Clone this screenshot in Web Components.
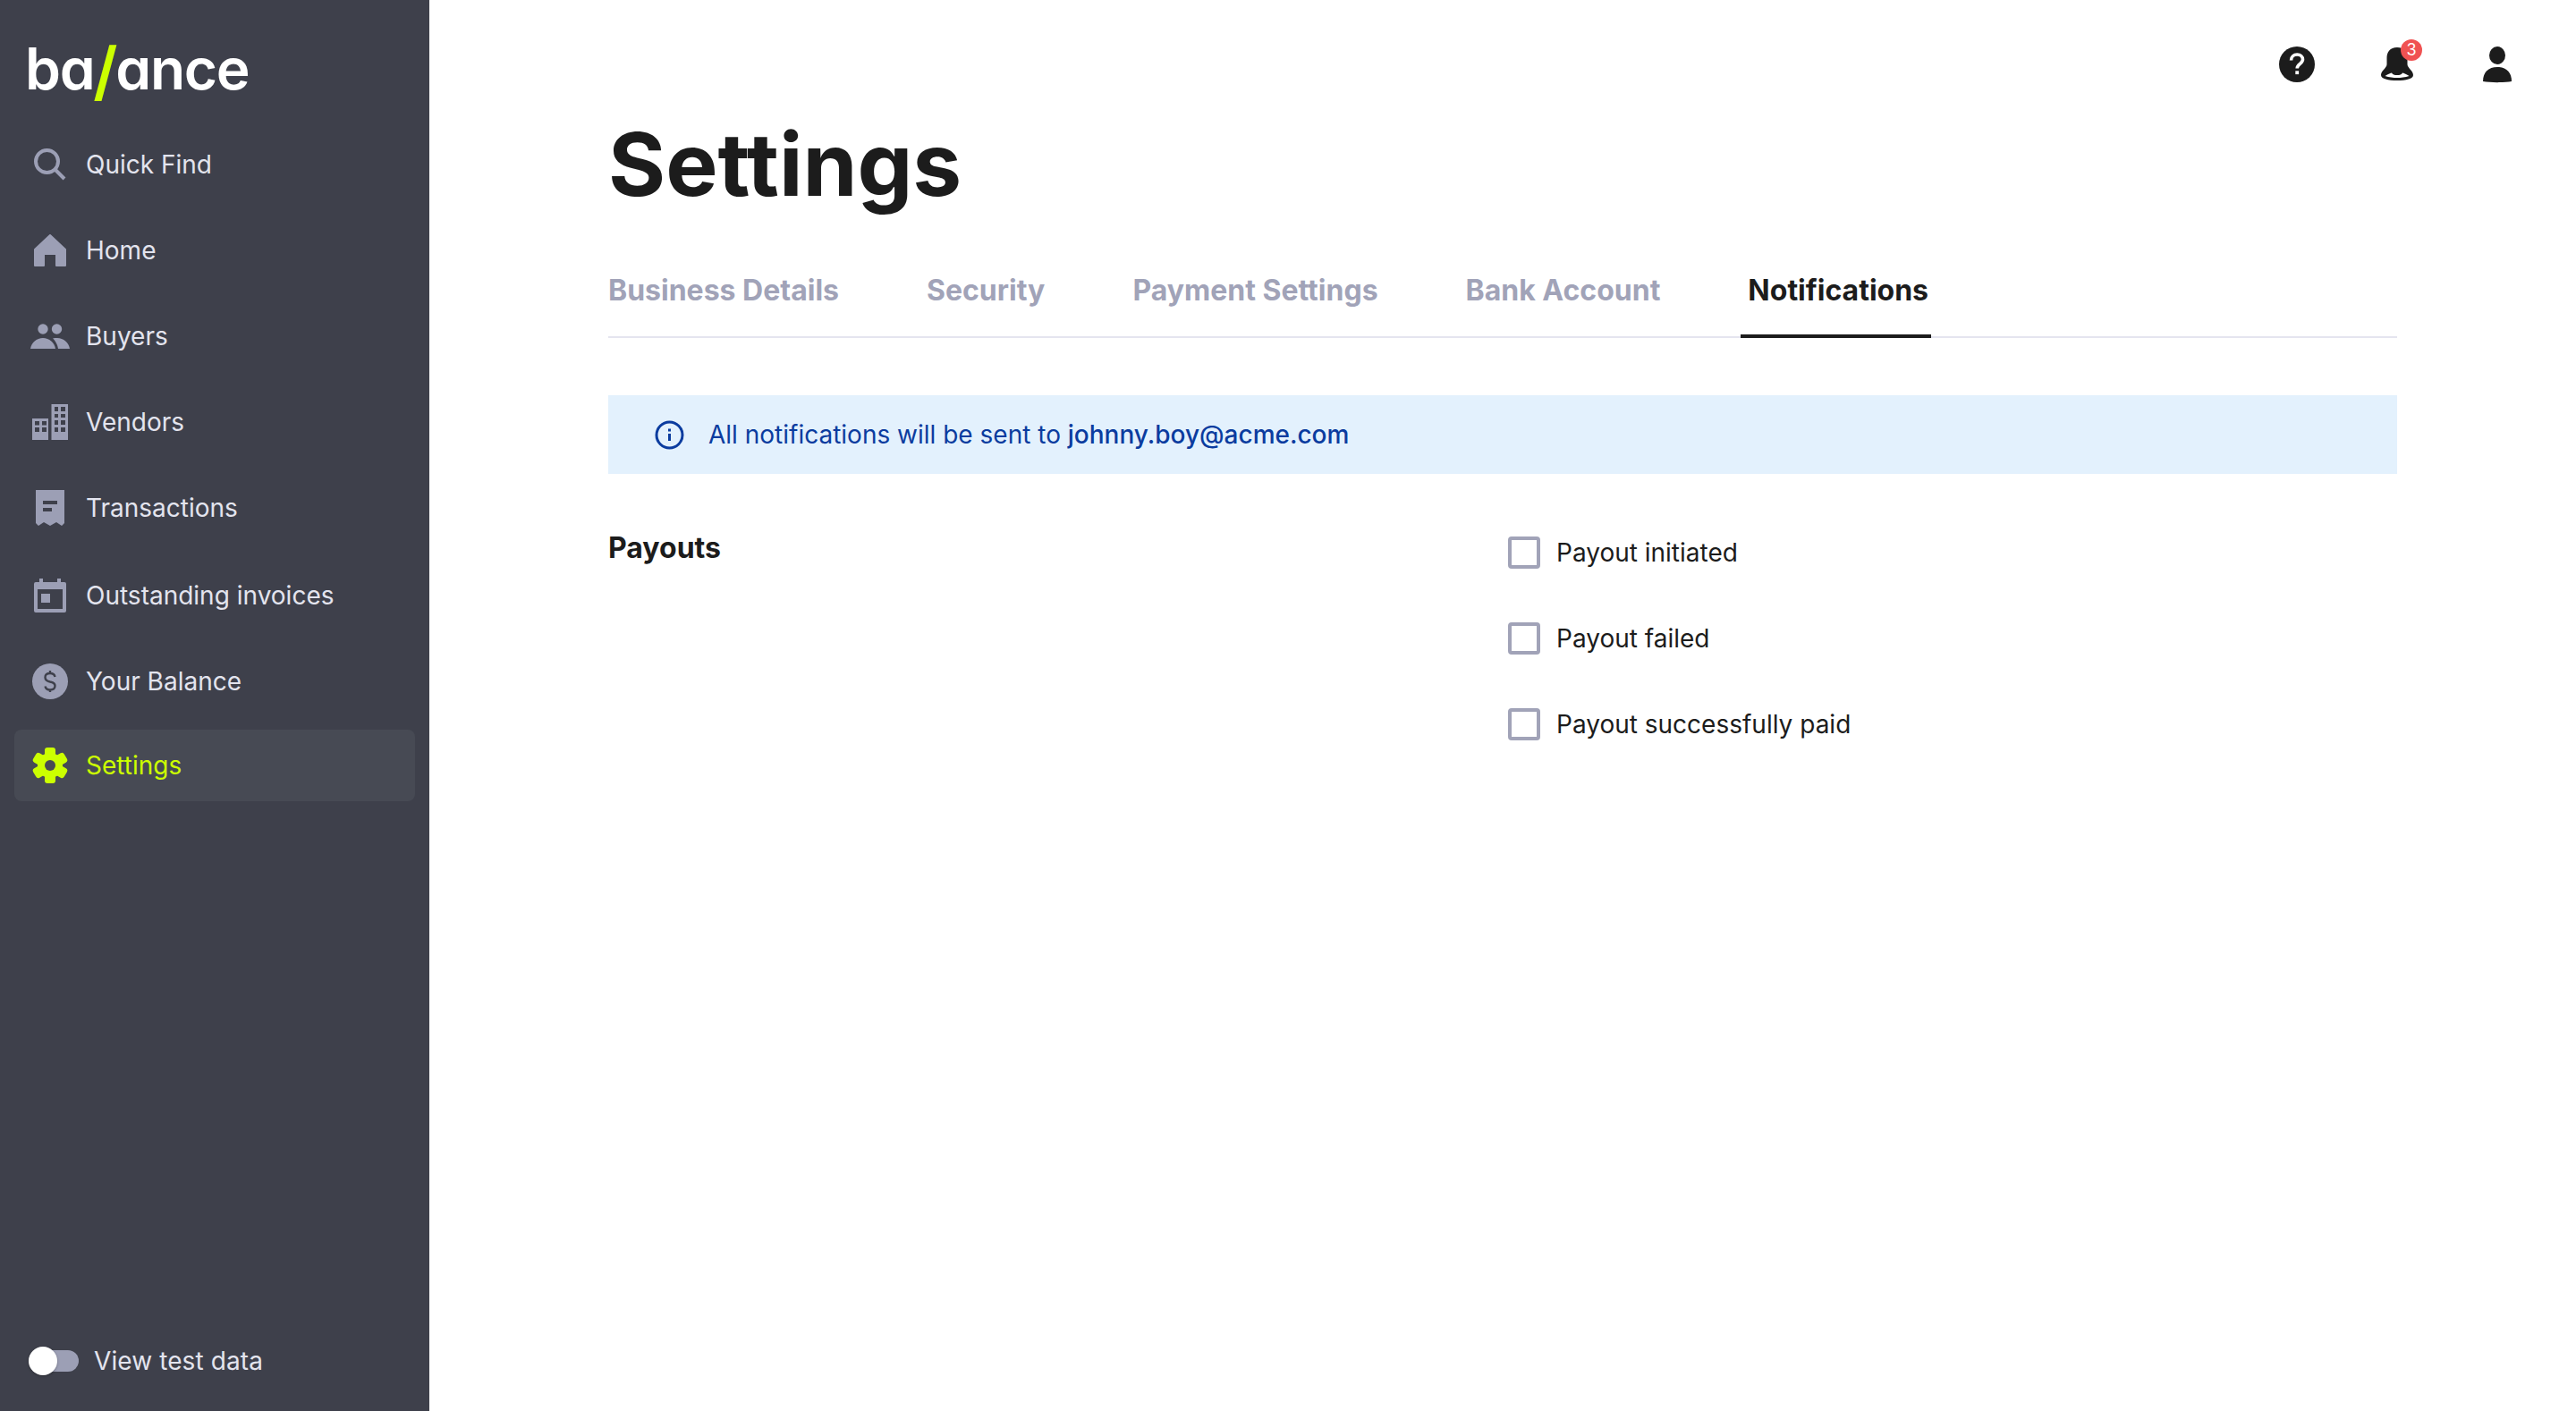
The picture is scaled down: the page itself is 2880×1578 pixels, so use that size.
<!DOCTYPE html>
<html lang="en">
<head>
<meta charset="utf-8">
<title>Settings</title>
<style>
    html, body { margin: 0; height: 100%; background: #fff; }
    body { font-family: Inter, "Liberation Sans", sans-serif; }
</style>
</head>
<body>
<app-shell>
    <side-nav slot="side">
        <nav-item icon="search">Quick Find</nav-item>
        <nav-item icon="home">Home</nav-item>
        <nav-item icon="buyers">Buyers</nav-item>
        <nav-item icon="vendors">Vendors</nav-item>
        <nav-item icon="receipt">Transactions</nav-item>
        <nav-item icon="calendar" style="margin-top:2px">Outstanding invoices</nav-item>
        <nav-item icon="dollar">Your Balance</nav-item>
        <nav-item icon="gear" active style="margin-top:-2px">Settings</nav-item>
    </side-nav>
    <top-bar></top-bar>
    <settings-page>
        <tab-bar>
            <tab-item>Business Details</tab-item>
            <tab-item>Security</tab-item>
            <tab-item>Payment Settings</tab-item>
            <tab-item>Bank Account</tab-item>
            <tab-item active>Notifications</tab-item>
        </tab-bar>
        <info-banner>All notifications will be sent to <b>johnny.boy@acme.com</b></info-banner>
        <option-group label="Payouts">
            <check-row>Payout initiated</check-row>
            <check-row>Payout failed</check-row>
            <check-row>Payout successfully paid</check-row>
        </option-group>
    </settings-page>
</app-shell>

<script>
'use strict';

const ICONS = {
    search: '<circle cx="20.5" cy="20.5" r="12.5" fill="none" stroke="currentColor" stroke-width="4"/><path d="M30 30l10 10" stroke="currentColor" stroke-width="4"/>',
    home: '<path d="M7 23L24 7l17 16v18H31V28H17v13H7z" fill="currentColor" stroke="currentColor" stroke-width="2" stroke-linejoin="round"/>',
    buyers: '<circle cx="16" cy="16" r="5.7" fill="currentColor"/><circle cx="31.5" cy="16" r="5.7" fill="currentColor"/><path d="M2 38c1-7 7-12 14-12s13 5 14 12z" fill="currentColor"/><path d="M27 26.5c1.500-.5 3-.5 5-.5 7 0 13 5 14 12H33c-.5-4-3-9-6-11.500z" fill="currentColor"/>',
    vendors: '<path fill="currentColor" fill-rule="evenodd" d="M4 20h18v24H4zM7 23v4.500h5V23zM15 23v4.500h5V23zM7 30v5h5v-5zM15 30v5h5v-5zM25.500 4H44v40H25.500zM29 7v5h4V7zM36 7v5h5V7zM29 15v4h4v-4zM36 15v4h5v-4zM29 22v5h4v-5zM36 22v5h5v-5zM29 30v5h4v-5zM36 30v5h5v-5z"/>',
    receipt: '<path fill="currentColor" fill-rule="evenodd" d="M8 4h32v37l-3 3-6-4-7 4-7-4-6 4-3-3zM16 16v4h16v-4zM16 24v4h10v-4z"/>',
    calendar: '<path fill="currentColor" fill-rule="evenodd" d="M12 5h4v4h16V5h4v4h4a2 2 0 0 1 2 2v30a2 2 0 0 1-2 2H8a2 2 0 0 1-2-2V11a2 2 0 0 1 2-2h4zM10 17v22h28V17zM14 22h10v10H14z"/>',
    dollar: '<circle cx="24" cy="24" r="20" fill="currentColor"/><path d="M29.500 19c-.5-3-3-4-5.500-4-3 0-5.500 1.500-5.500 4.500 0 3.500 3 4.500 5.500 5 3 .5 5.500 1.500 5.500 4.500s-2.500 4.500-5.500 4.500c-3 0-5-1.500-5.500-4M24 12v3M24 33.500V36" fill="none" stroke="#3e404b" stroke-width="2.400"/>',
    gear: '<g fill="currentColor"><rect x="18" y="4" width="12" height="40" rx="3"/><rect x="18" y="4" width="12" height="40" rx="3" transform="rotate(60 24 24)"/><rect x="18" y="4" width="12" height="40" rx="3" transform="rotate(120 24 24)"/><circle cx="24" cy="24" r="14"/></g><circle cx="24" cy="24" r="6" fill="#474a54"/>',
    help: '<circle cx="24" cy="24" r="20" fill="currentColor"/><path d="M17.500 19.500c0-4 3-6.500 6.700-6.500 3.700 0 6.300 2.300 6.300 5.600 0 4.600-6.300 5-6.300 9.900" fill="none" stroke="#fff" stroke-width="3.600"/><path d="M22.300 31.300h3.800v3.800h-3.800z" fill="#fff"/>',
    bell: '<path fill="currentColor" d="M24 5c-8 0-11.500 5-11.500 12v7c0 4-6.500 7-6.500 12 0 4 8 6 18 6s18-2 18-6c0-5-6.500-8-6.500-12v-7C35.500 10 32 5 24 5z"/><path fill="#fff" d="M10.500 37c3.500-2 6.500-3.500 7.500-3.500 1 2 3 2.500 6 2.500s5-.5 6-2.500c1 0 4 1.500 7.500 3.500-4.500 1.500-9.500 2-13.500 2s-9-.5-13.500-2z"/>',
    user: '<ellipse cx="24" cy="14" rx="9" ry="10" fill="currentColor"/><path fill="currentColor" d="M8 43c0-10 6-16 16-16s16 6 16 16c-8 1.500-24 1.500-32 0z"/>',
    info: '<circle cx="16.500" cy="16.500" r="14.500" fill="none" stroke="currentColor" stroke-width="3"/><path d="M15 15h3v8h-3zM15 9.500h3v3h-3z" fill="currentColor"/>'
};

function svgIcon(name, size = 48) {
    const box = name === 'info' ? 33 : 48;

    return `<svg width="${size}" height="${size}" viewBox="0 0 ${box} ${box}" aria-hidden="true">${ICONS[name]}</svg>`;
}

class ShadowElement extends HTMLElement {
    constructor() {
        super();

        this.attachShadow({ mode: 'open' });
    }

    connectedCallback() {
        this.shadowRoot.innerHTML = this.render();
    }
}

customElements.define('app-shell', class extends ShadowElement {
    render() {
        return `<style>
            :host { display: grid; grid-template-columns: 480px 1fr; grid-template-rows: auto 1fr; height: 100vh; }
            ::slotted([slot=side]) { grid-row: 1 / 3; }
        </style>
        <slot name="side"></slot><slot></slot>`;
    }
});

customElements.define('side-nav', class extends ShadowElement {
    render() {
        return `<style>
            :host { display: flex; flex-direction: column; background: #3e404b; padding: 0 16px; box-sizing: border-box; }
            .logo { display: flex; align-items: baseline; height: 144px; box-sizing: border-box; padding: 38px 0 0 12px;
                font: 600 64px/1 Inter, sans-serif; font-feature-settings: "cv11"; color: #fff; letter-spacing: -1.3px; }
            .logo i { font: 600 72px/1 Inter, sans-serif; color: #ccff00; margin: 0 -1px; position: relative; top: 5px; }
            nav { display: flex; flex-direction: column; gap: 16px; flex: 1; }
            .foot { display: flex; align-items: center; gap: 16px; height: 32px; margin: 0 0 40px 16px; }
        </style>
        <div class="logo">ba<i>/</i>ance</div>
        <nav><slot></slot></nav>
        <div class="foot"><test-toggle>View test data</test-toggle></div>`;
    }
});

customElements.define('nav-item', class extends ShadowElement {
    render() {
        const active = this.hasAttribute('active');

        return `<style>
            :host { display: flex; align-items: center; gap: 16px; height: 80px; padding-left: 16px; border-radius: 8px;
                font: 400 28px/1 Inter, sans-serif;
                color: ${active ? '#ccff00' : '#e3e4ee'}; background: ${active ? '#474a54' : 'none'}; }
            svg { flex: none; color: ${active ? '#ccff00' : '#9c9fb5'}; }
        </style>
        ${svgIcon(this.getAttribute('icon'))}<span><slot></slot></span>`;
    }
});

customElements.define('test-toggle', class extends ShadowElement {
    render() {
        return `<style>
            :host { display: flex; align-items: center; gap: 17px; font: 400 28px/1 Inter, sans-serif; letter-spacing: .1px; color: #e3e4ee; }
            .track { position: relative; width: 56px; height: 24px; border-radius: 12px; background: #9c9fb5; }
            .knob { position: absolute; left: 0; top: -4px; width: 32px; height: 32px; border-radius: 50%; background: #fff; box-shadow: 0 1px 3px rgba(0,0,0,.3); }
        </style>
        <span class="track"><span class="knob"></span></span><span><slot></slot></span>`;
    }
});

customElements.define('top-bar', class extends ShadowElement {
    render() {
        return `<style>
            :host { display: flex; justify-content: flex-end; gap: 64px; padding: 48px 64px 0 0; color: #1c1c1c; }
            span { position: relative; display: block; height: 48px; }
            b { position: absolute; left: 28px; top: -4px; width: 24px; height: 24px; border-radius: 50%; background: #f05252;
                color: #fff; font: 400 18px/24px Inter, sans-serif; text-align: center; }
        </style>
        <span>${svgIcon('help')}</span>
        <span>${svgIcon('bell')}<b>3</b></span>
        <span>${svgIcon('user')}</span>`;
    }
});

customElements.define('settings-page', class extends ShadowElement {
    render() {
        return `<style>
            :host { display: block; padding: 0 200px; }
            h1 { margin: 30px 0 32px; font: 700 98px/116px Inter, sans-serif; color: #1c1c1c; }
        </style>
        <h1>Settings</h1><slot></slot>`;
    }
});

customElements.define('tab-bar', class extends ShadowElement {
    render() {
        return `<style>
            :host { display: block; border-bottom: 2px solid #e5e5ef; }
            div { display: flex; gap: 87px; margin-left: -8px; }
        </style>
        <div><slot></slot></div>`;
    }
});

customElements.define('tab-item', class extends ShadowElement {
    render() {
        const active = this.hasAttribute('active');

        return `<style>
            :host { display: block; padding: 0 3px 0 8px; height: 104px; margin-bottom: -2px;
                font: 700 32px/102px Inter, sans-serif; color: ${active ? '#1c1c1c' : '#a1a3b8'};
                ${active ? 'box-shadow: inset 0 -4px 0 #1c1c1c;' : ''} }
        </style>
        <slot></slot>`;
    }
});

customElements.define('info-banner', class extends ShadowElement {
    render() {
        return `<style>
            :host { display: flex; align-items: center; gap: 27px; height: 88px; margin-top: 64px; padding-left: 52px;
                background: #e3f1fd; color: #0b3c9f; font: 400 28px/1 Inter, sans-serif; }
            ::slotted(b) { font-weight: 450; }
        </style>
        ${svgIcon('info', 33)}<span><slot></slot></span>`;
    }
});

customElements.define('option-group', class extends ShadowElement {
    render() {
        return `<style>
            :host { display: grid; grid-template-columns: 1fr 1fr; column-gap: 12px; margin-top: 64px; }
            h2 { margin: 0; font: 700 32px/38px Inter, sans-serif; color: #1c1c1c; }
            div { display: flex; flex-direction: column; gap: 60px; padding-top: 6px; }
        </style>
        <h2>${this.getAttribute('label')}</h2><div><slot></slot></div>`;
    }
});

customElements.define('check-row', class extends ShadowElement {
    render() {
        return `<style>
            :host { display: flex; align-items: center; gap: 18px; height: 36px; font: 400 28px/1 Inter, sans-serif; color: #1c1c1c; }
            i { width: 36px; height: 36px; box-sizing: border-box; border: 4px solid #a1a3b8; border-radius: 4px; }
        </style>
        <i></i><span><slot></slot></span>`;
    }
});
</script>
</body>
</html>
